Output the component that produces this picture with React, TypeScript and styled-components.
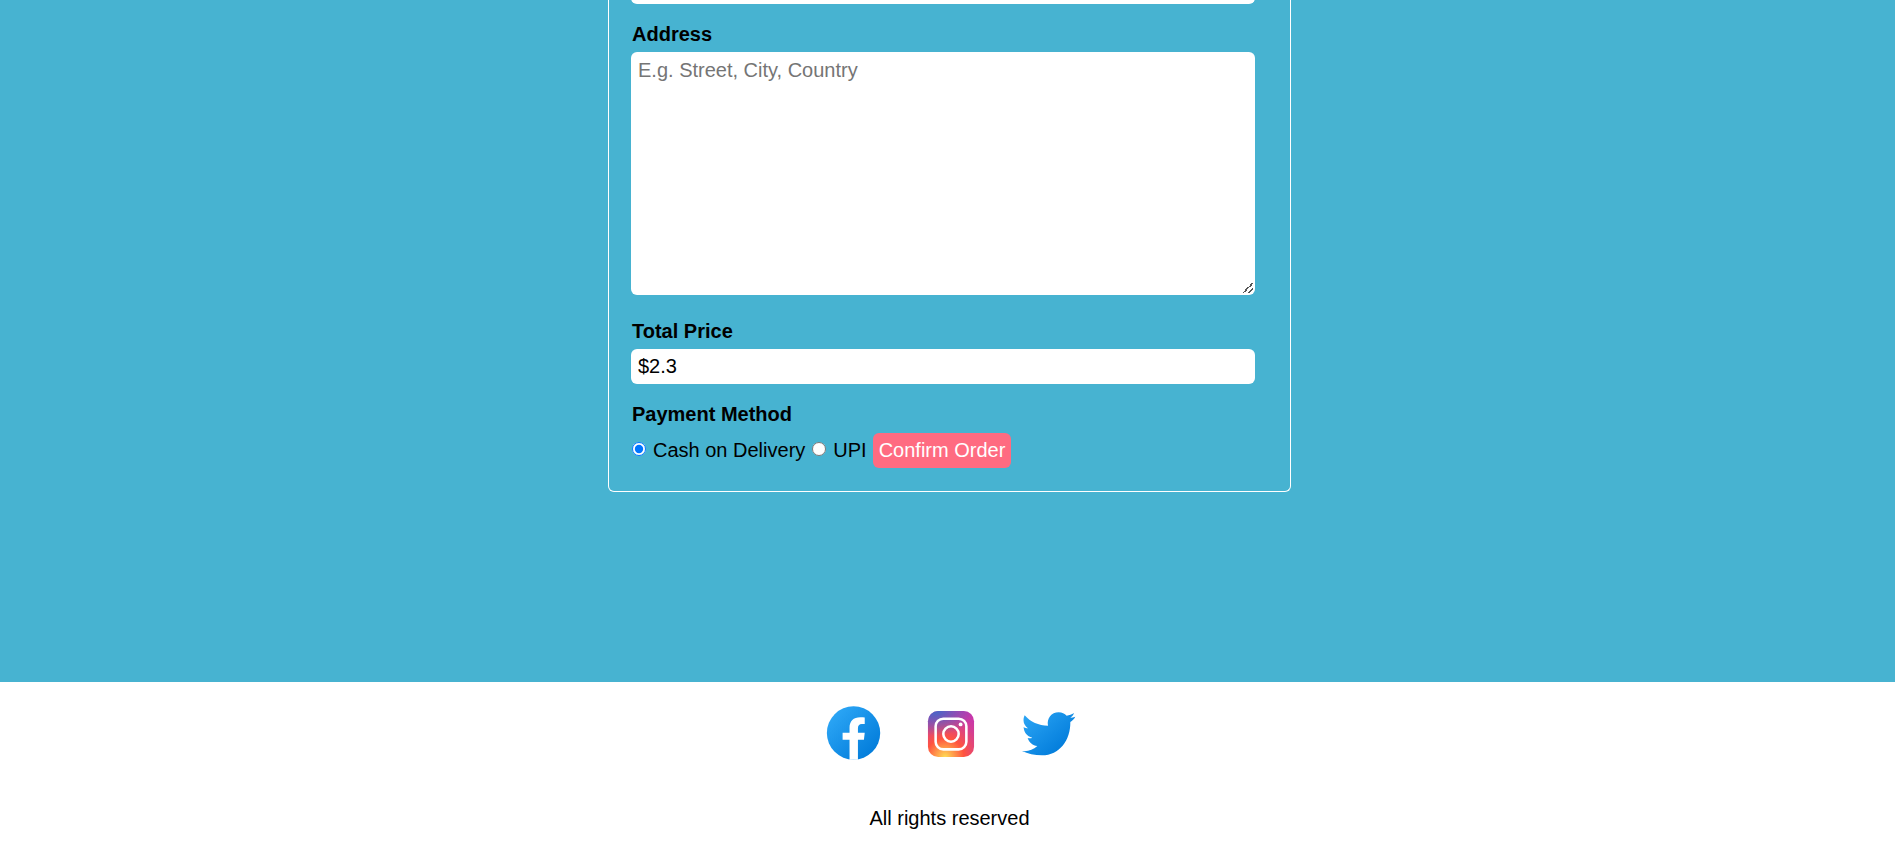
import React from "react";
import styled, { createGlobalStyle } from "styled-components";

const GlobalStyle = createGlobalStyle`
  * { box-sizing: border-box; }
  body {
    margin: 0;
    background: #fff;
    color: #000;
    font: 20px/23px "Liberation Sans", Arial, sans-serif;
  }
`;

const Page = styled.div`
  overflow: hidden;
`;

const Checkout = styled.main`
  display: flex;
  justify-content: center;
  padding: 0 0 190px 4px;
  background: #47b3d1;
`;

const Card = styled.form`
  width: 100%;
  max-width: 683px;
  padding: 0 35px 23px 22px;
  border: 1px solid #fff;
  border-top: 0;
  border-radius: 0 0 6px 6px;
`;

const Field = styled.div`
  display: flex;
  flex-direction: column;
  gap: 6px;
  margin-bottom: 19px;
`;

const ScrolledField = styled(Field)`
  margin-top: -31px;
`;

const Caption = styled.label`
  padding-left: 1px;
  font-weight: bold;
`;

const Options = styled.fieldset`
  margin: 0;
  padding: 0;
  border: 0;
`;

const Legend = styled.legend`
  padding: 0 0 0 1px;
  margin-bottom: 7px;
  font-weight: bold;
`;

const Input = styled.input`
  height: 35px;
  padding: 6px 7px;
  border: 0;
  border-radius: 6px;
  background: #fff;
  color: #000;
  font: inherit;
`;

const TextArea = styled.textarea`
  height: 243px;
  margin-bottom: 6px;
  padding: 7px;
  border: 0;
  border-radius: 6px;
  background: #fff;
  font: inherit;
  resize: both;

  &::placeholder { color: #757575; }

  &::-webkit-resizer {
    background: linear-gradient(
      135deg,
      transparent 45%, #555 45% 55%,
      transparent 55% 71%, #555 71% 81%,
      transparent 81%
    ) 3px 3px / 10px 10px no-repeat;
  }
`;

const Row = styled.div`
  display: flex;
  align-items: center;
  gap: 6px;
`;

const Option = styled.label`
  display: flex;
  align-items: center;
  gap: 7px;
`;

const Radio = styled.input`
  width: 14px;
  height: 14px;
  margin: 0 0 4px 1px;
`;

const Button = styled.button`
  height: 35px;
  padding: 0 6px;
  border: 0;
  border-radius: 6px;
  background: #ff6b81;
  color: #fff;
  font: inherit;
`;

const Footer = styled.footer`
  display: flex;
  flex-direction: column;
  align-items: center;
  gap: 42px;
  padding: 19px 0 12px 4px;
`;

const Social = styled.nav`
  display: flex;
  gap: 34px;
  padding-left: 3px;
`;

const SocialLink = styled.a`
  display: block;
  width: 64px;
  height: 64px;

  svg { display: block; width: 100%; height: 100%; }
`;

const Notice = styled.p`
  margin: 0;
`;

const FacebookIcon = () => (
  <svg viewBox="-0.4 0 48 48" aria-hidden="true">
    <linearGradient id="fb" x1="9.993" y1="9.993" x2="40.615" y2="40.615" gradientUnits="userSpaceOnUse">
      <stop offset="0" stopColor="#2aa4f4" />
      <stop offset="1" stopColor="#007ad9" />
    </linearGradient>
    <circle cx="24" cy="24" r="20" fill="url(#fb)" />
    <path fill="#fff" d="M27.3 29.1h4.5l.6-5.2h-5.1v-3.2c0-2.2.9-3.4 2.9-3.4h2.2v-5c-.8-.1-1.9-.2-3.3-.2-5.2 0-8.1 2.9-8.1 8.1v3.7h-5.2v5.2H21V44h6.3z" />
  </svg>
);

const InstagramIcon = () => (
  <svg viewBox="-1 -1.8 50 50" aria-hidden="true">
    <radialGradient id="igWarm" cx="19.38" cy="42.035" r="44.899" gradientUnits="userSpaceOnUse">
      <stop offset="0" stopColor="#fd5" />
      <stop offset=".328" stopColor="#ff543f" />
      <stop offset=".348" stopColor="#fc5245" />
      <stop offset=".504" stopColor="#e64771" />
      <stop offset=".643" stopColor="#d53e91" />
      <stop offset=".761" stopColor="#cc39a4" />
      <stop offset=".841" stopColor="#c837ab" />
    </radialGradient>
    <radialGradient id="igCool" cx="11.786" cy="5.54" r="29.813" gradientTransform="matrix(1 0 0 .6663 0 1.849)" gradientUnits="userSpaceOnUse">
      <stop offset="0" stopColor="#4168c9" />
      <stop offset=".999" stopColor="#4168c9" stopOpacity="0" />
    </radialGradient>
    <rect x="6" y="6" width="36" height="36" rx="8" fill="url(#igWarm)" />
    <rect x="6" y="6" width="36" height="36" rx="8" fill="url(#igCool)" />
    <rect x="12" y="12" width="24" height="24" rx="6" fill="none" stroke="#fff" strokeWidth="2" />
    <circle cx="24" cy="24" r="6" fill="none" stroke="#fff" strokeWidth="2" />
    <circle cx="31.5" cy="16.5" r="1.5" fill="#fff" />
  </svg>
);

const TwitterIcon = () => (
  <svg viewBox="6 3 192 192" aria-hidden="true">
    <linearGradient id="tw" x1="42" y1="36" x2="145" y2="158" gradientUnits="userSpaceOnUse">
      <stop offset="0" stopColor="#2aa4f4" />
      <stop offset="1" stopColor="#007ad9" />
    </linearGradient>
    <path fill="url(#tw)" d="M29 46C46 66 71 77 99 77C95 55 109 37 131 37C141 37 149 41 155 47C163 46 170 43 177 39C175 45 171 50 166 53C171 53 176 52 181 50C177 57 172 62 166 66C167 120 134 166 81 166C59 166 38 161 21 153C40 155 54 149 67 138C53 137 43 128 38 114C43 115 48 115 52 113C36 109 26 96 26 81C30 84 35 85 39 85C26 76 22 60 29 46Z" />
  </svg>
);

export default function App() {
  return (
    <Page>
      <GlobalStyle />
      <Checkout>
        <Card onSubmit={(e: React.FormEvent) => e.preventDefault()}>
          <ScrolledField>
            <Input type="email" aria-label="Email" />
          </ScrolledField>
          <Field>
            <Caption htmlFor="address">Address</Caption>
            <TextArea id="address" placeholder="E.g. Street, City, Country" />
          </Field>
          <Field>
            <Caption htmlFor="total">Total Price</Caption>
            <Input id="total" type="text" value="$2.3" readOnly />
          </Field>
          <Options>
            <Legend>Payment Method</Legend>
            <Row>
              <Option>
                <Radio type="radio" name="payment" value="cash" defaultChecked />
                Cash on Delivery
              </Option>
              <Option>
                <Radio type="radio" name="payment" value="upi" />
                UPI
              </Option>
              <Button type="submit">Confirm Order</Button>
            </Row>
          </Options>
        </Card>
      </Checkout>
      <Footer>
        <Social aria-label="Social media">
          <SocialLink href="#facebook" aria-label="Facebook"><FacebookIcon /></SocialLink>
          <SocialLink href="#instagram" aria-label="Instagram"><InstagramIcon /></SocialLink>
          <SocialLink href="#twitter" aria-label="Twitter"><TwitterIcon /></SocialLink>
        </Social>
        <Notice>All rights reserved</Notice>
      </Footer>
    </Page>
  );
}
